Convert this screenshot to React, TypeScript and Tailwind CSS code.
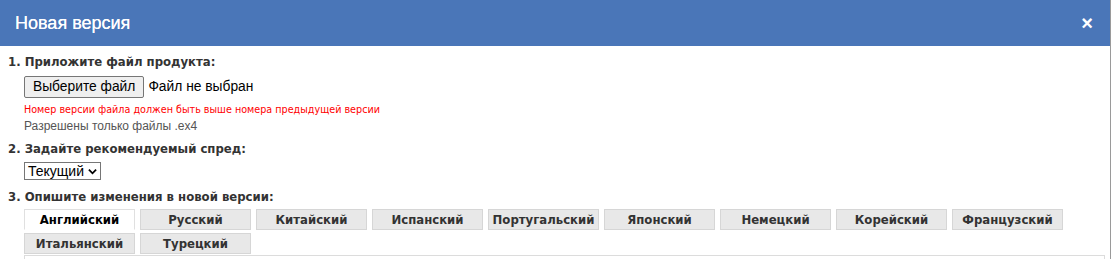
import React from "react";

const tabs = [
  "Английский",
  "Русский",
  "Китайский",
  "Испанский",
  "Португальский",
  "Японский",
  "Немецкий",
  "Корейский",
  "Французский",
  "Итальянский",
  "Турецкий",
];

const label =
  "text-[13px] font-bold text-[#333] leading-[16px] font-['DejaVu_Sans_Condensed',sans-serif]";

const App: React.FC = () => {
  return (
    <div className="w-[1112px] h-[259px] bg-white overflow-hidden">
      <div className="w-[1111px] h-full border-r border-[#9a9a9a] font-['DejaVu_Sans',sans-serif]">
        {/* Header */}
        <div className="h-[46px] bg-[#4a76b8] flex items-center justify-between pl-[15px] pr-[17px]">
          <h2 className="text-white text-[18px] font-['Liberation_Sans',sans-serif] [text-shadow:0_0_0.4px_white]">
            Новая версия
          </h2>
          <span className="text-white text-[20px] font-bold leading-none font-['Liberation_Sans',sans-serif]">
            ×
          </span>
        </div>

        <div className="pl-[8px] pt-[8px]">
          <div className={label}>1. Приложите файл продукта:</div>
          <div className="pl-[16px]">
            <div className="flex items-center gap-[4px] mt-[6px] font-['Liberation_Sans',sans-serif] text-[13.8px] text-black">
              <button className="h-[22px] px-[8px] bg-[#efefef] border border-[#767676] rounded-[2px] leading-none">
                Выберите файл
              </button>
              <span>Файл не выбран</span>
            </div>
            <div className="mt-[5px] text-[10.7px] text-[#ff0000] leading-[14px] font-['DejaVu_Sans_Condensed',sans-serif]">
              Номер версии файла должен быть выше номера предыдущей версии
            </div>
            <div className="mt-[2px] text-[12px] text-[#555] leading-[15px] font-['Liberation_Sans',sans-serif]">
              Разрешены только файлы .ex4
            </div>
          </div>

          <div className={`${label} mt-[7px]`}>2. Задайте рекомендуемый спред:</div>
          <div className="pl-[16px] mt-[5px] flex">
            <div className="flex items-center h-[18px] w-[77px] border border-[#767676] px-[3px] text-[14px] leading-none font-['Liberation_Sans',sans-serif] text-black">
              <span>Текущий</span>
              <svg width="10" height="7" viewBox="0 0 10 7" className="ml-[4px]">
                <path d="M1 1.5 L5 5.5 L9 1.5" stroke="black" strokeWidth="2" fill="none" />
              </svg>
            </div>
          </div>

          <div className={`${label} mt-[9px]`}>3. Опишите изменения в новой версии:</div>

          <div className="pl-[16px] pr-[5px] mt-[4px]">
            <div className="flex flex-wrap gap-x-[5px] gap-y-[3px]">
              {tabs.map((t, i) => (
                <div
                  key={t}
                  className={`w-[111px] h-[21px] flex items-center justify-center text-[13px] font-bold border font-['DejaVu_Sans_Condensed',sans-serif] ${
                    i === 0
                      ? "bg-white border-[#e0e0e0] border-b-white text-black"
                      : "bg-[#e8e8e8] border-[#d6d6d6] text-[#333]"
                  }`}
                >
                  {t}
                </div>
              ))}
            </div>
            <div className="mt-[1px] h-[20px] border border-[#dcdcdc]" />
          </div>
        </div>
      </div>
    </div>
  );
};

export default App;
